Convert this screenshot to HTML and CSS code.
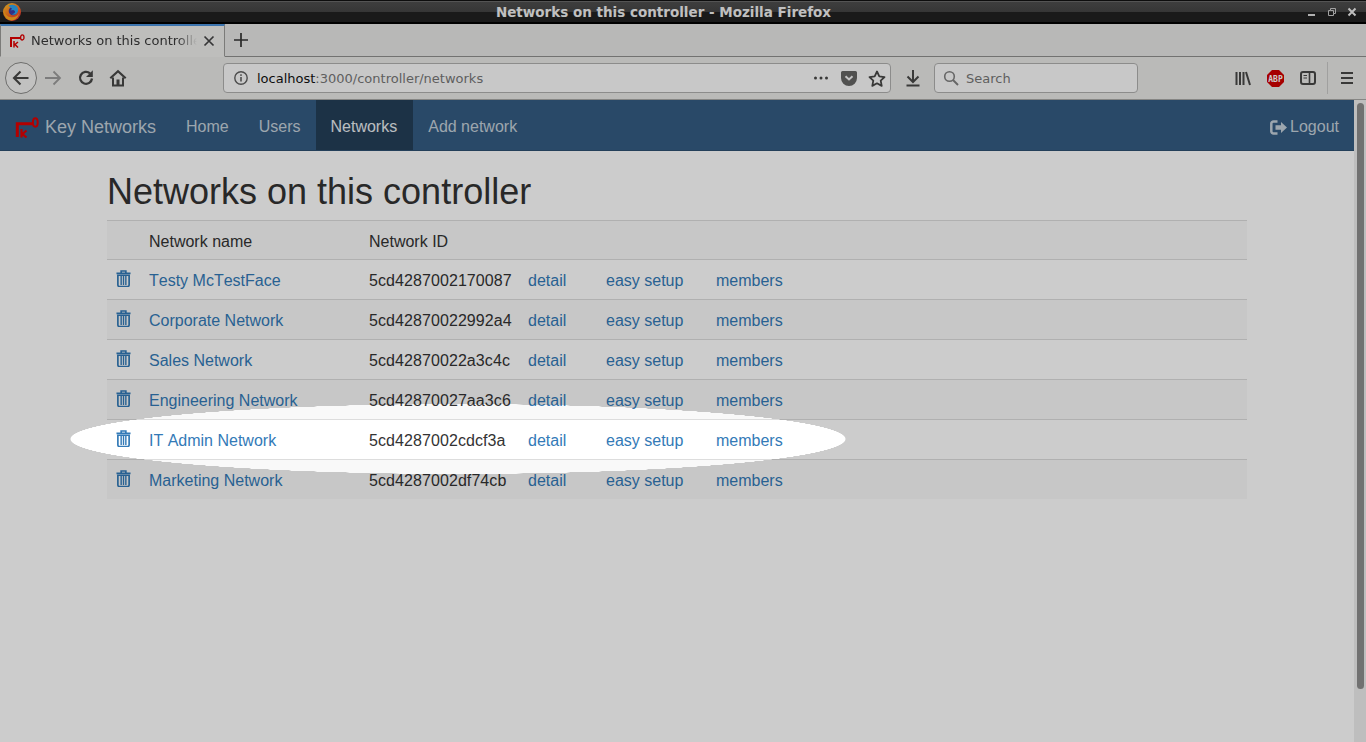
FILE: index.html
```html
<!DOCTYPE html>
<html lang="en">
<head>
<meta charset="utf-8">
<title>Networks on this controller</title>
<link rel="stylesheet" href="styles.css">
</head>
<body>
<div class="window">
  <header class="titlebar">
    <svg class="ff-logo" width="18" height="18" viewBox="0 0 18 18">
      <defs><linearGradient id="ffg" x1="0.1" y1="0" x2="0.8" y2="1"><stop offset="0" stop-color="#ffc62b"/><stop offset=".5" stop-color="#ff7a1f"/><stop offset="1" stop-color="#e0243c"/></linearGradient></defs>
      <circle cx="9" cy="9" r="9" fill="url(#ffg)"/>
      <circle cx="10" cy="8" r="4.300" fill="#3f3aa5"/>
      <path d="M5.500 2.700c3-1.900 7.500-1.200 9 1.800 1.200 2.300.6 5.200-1.400 6.500-1.700 1.100-3.500.8-4.700-.2 1.700.3 3-.3 3.500-1.400.4-1-.2-2-1.600-2.400L7.500 7.600 9 5.700C7.800 4.900 6.700 3.600 5.500 2.700z" fill="#2da6f0"/>
      <path d="M.6 6.500c.9 4.500 3.700 7.600 8.100 7.800 3.200.1 5.900-1.300 7.300-4C15.300 14.800 12 17.500 8.700 17.500 4 17.500.2 13 .6 6.500z" fill="#ffab1f"/>
    </svg>
    <span class="window-title">Networks on this controller - Mozilla Firefox</span>
    <div class="window-buttons">
      <svg width="12" height="12" viewBox="0 0 12 12"><rect x="2" y="8" width="7" height="2" fill="#ddd"/></svg>
      <svg width="12" height="12" viewBox="0 0 12 12"><path d="M4.500 2.500h5v5h-2v2h-5v-5h2zM4.500 4.500h3v3" fill="none" stroke="#ccc"/></svg>
      <svg width="12" height="12" viewBox="0 0 12 12"><path d="M2.500 2.500l7 7M9.500 2.500l-7 7" stroke="#eee" stroke-width="2"/></svg>
    </div>
  </header>

  <div class="tabbar">
    <div class="tab">
      <svg class="key-small" width="15" height="14" viewBox="0 0 15 14"><path d="M1 13V4h9.500" fill="none" stroke="#e00000" stroke-width="2"/><ellipse cx="12.300" cy="3.400" rx="1.700" ry="2.600" fill="none" stroke="#e00000" stroke-width="1.300"/><path d="M4 7v6.500M8 8L5 10.500l3 3" fill="none" stroke="#e00000" stroke-width="1.500"/></svg>
      <span class="tab-label">Networks on this controller</span>
      <svg class="tab-close" width="12" height="12" viewBox="0 0 12 12"><path d="M1.500 1.500l9 9M10.500 1.500l-9 9" stroke="#444" stroke-width="1.700"/></svg>
    </div>
    <svg class="new-tab" width="16" height="16" viewBox="0 0 16 16"><path d="M8 1v14M1 8h14" stroke="#333" stroke-width="1.700"/></svg>
  </div>

  <nav class="toolbar">
    <span class="back-btn">
      <svg width="20" height="20" viewBox="0 0 20 20"><path d="M17.500 10H3.500M9.500 3.500L3 10l6.500 6.500" fill="none" stroke="#484847" stroke-width="2.100"/></svg>
    </span>
    <svg class="tb-icon forward" width="18" height="18" viewBox="0 0 18 18"><path d="M1 9h15M9.500 2.500L16 9l-6.500 6.500" fill="none" stroke="#9c9c9b" stroke-width="1.800"/></svg>
    <svg class="tb-icon reload" width="18" height="18" viewBox="0 0 18 18"><path d="M15 9.500A6 6 0 1 1 13 4.300" fill="none" stroke="#484847" stroke-width="2.300"/><path d="M15.800 1.200v6.800H9z" fill="#484847"/></svg>
    <svg class="tb-icon home" width="18" height="18" viewBox="0 0 18 18"><path d="M1.300 9.300L9 2.200l7.700 7.100" fill="none" stroke="#484847" stroke-width="2.200"/><path d="M4 8.500V16.500h10V8.500" fill="none" stroke="#484847" stroke-width="2"/><rect x="7.500" y="10.500" width="3" height="6" fill="#484847"/></svg>
    <div class="urlbar">
      <svg width="16" height="16" viewBox="0 0 16 16"><circle cx="8" cy="8" r="6.200" fill="none" stroke="#606060" stroke-width="1.400"/><rect x="7.200" y="7" width="1.600" height="4.500" fill="#606060"/><rect x="7.200" y="4.300" width="1.600" height="1.600" fill="#606060"/></svg>
      <span class="url"><span class="host">localhost</span>:3000/controller/networks</span>
      <svg class="dots" width="16" height="4" viewBox="0 0 16 4"><circle cx="2.500" cy="2" r="1.500" fill="#484847"/><circle cx="8" cy="2" r="1.500" fill="#484847"/><circle cx="13.500" cy="2" r="1.500" fill="#484847"/></svg>
      <svg class="pocket" width="16" height="15" viewBox="0 0 16 15"><path d="M1.500 0h13A1.500 1.500 0 0 1 16 1.500V7A8 8 0 0 1 0 7V1.500A1.500 1.500 0 0 1 1.500 0z" fill="#666665"/><path d="M4.500 5.200L8 8.500l3.500-3.300" fill="none" stroke="#f5f5f5" stroke-width="2"/></svg>
      <svg class="star" width="18" height="17" viewBox="0 0 18 17"><path d="M9 1.500l2.300 4.900 5.200.7-3.800 3.600 1 5.200L9 13.300l-4.700 2.600 1-5.200L1.500 7.100l5.200-.7z" fill="none" stroke="#484847" stroke-width="1.800" stroke-linejoin="round"/></svg>
    </div>
    <svg class="download" width="16" height="18" viewBox="0 0 16 18"><path d="M8 1v11M2.500 7.500L8 13l5.500-5.500" fill="none" stroke="#484847" stroke-width="2"/><rect x="1.500" y="15.500" width="13" height="2" fill="#484847"/></svg>
    <div class="searchbar">
      <svg width="16" height="16" viewBox="0 0 16 16"><circle cx="6.500" cy="6.500" r="4.800" fill="none" stroke="#808080" stroke-width="1.600"/><path d="M10 10l5 5" stroke="#808080" stroke-width="1.900"/></svg>
      <span class="search-text">Search</span>
    </div>
    <div class="tb-right">
      <svg width="16" height="15" viewBox="0 0 16 15"><path d="M1.500 1v13M5 1v13M8.500 1v13M11 1l4 13" fill="none" stroke="#484847" stroke-width="2"/></svg>
      <svg class="abp" width="17" height="17" viewBox="0 0 17 17"><path d="M5 0h7l5 5v7l-5 5H5l-5-5V5z" fill="#d00000"/><text x="8.500" y="11.500" class="abp-text" text-anchor="middle">ABP</text></svg>
      <svg width="16" height="14" viewBox="0 0 16 14"><rect x="1" y="1" width="14" height="12" rx="2" fill="none" stroke="#484847" stroke-width="2"/><path d="M9.500 1v12" stroke="#484847" stroke-width="1.600"/><path d="M3.500 4.500h3.500M3.500 7h3.500" stroke="#484847" stroke-width="1"/></svg>
      <span class="tb-sep"></span>
      <svg width="12" height="12" viewBox="0 0 12 12"><path d="M0 1h12M0 6h12M0 11h12" stroke="#484847" stroke-width="2"/></svg>
    </div>
  </nav>

  <div class="viewport">
    <main class="page">
      <div class="navbar">
        <a class="brand">
          <svg width="24" height="21" viewBox="0 0 24 21"><path d="M2.300 20V6.700h15" fill="none" stroke="#e00000" stroke-width="3"/><ellipse cx="20.300" cy="5.500" rx="2.400" ry="4.200" fill="none" stroke="#e00000" stroke-width="2"/><path d="M6.500 12V20.500M11.500 13.500l-4 3.500 4 3.500" fill="none" stroke="#e00000" stroke-width="2.200"/></svg>
          <span>Key Networks</span>
        </a>
        <a class="nav-link">Home</a>
        <a class="nav-link">Users</a>
        <a class="nav-link active">Networks</a>
        <a class="nav-link">Add network</a>
        <a class="nav-link logout">
          <svg width="17" height="15" viewBox="0 0 17 15"><path d="M7.500 1.500H3.500A2.200 2.200 0 0 0 1.300 3.700v7.600a2.200 2.200 0 0 0 2.200 2.200h4" fill="none" stroke="#c4d0da" stroke-width="2.500"/><path d="M5.500 5.300h5.500V2l6 5.500-6 5.500V9.700H5.500z" fill="#c4d0da"/></svg>
          <span>Logout</span>
        </a>
      </div>
      <div class="container">
        <h1>Networks on this controller</h1>
        <table class="networks">
          <colgroup><col class="c-del"><col class="c-name"><col class="c-id"><col class="c-detail"><col class="c-setup"><col></colgroup>
          <tr class="striped head"><td></td><td>Network name</td><td>Network ID</td><td></td><td></td><td></td></tr>
          <tr><td><svg class="trash" viewBox="0 0 16 18"><use href="#trash"/></svg></td><td><a>Testy McTestFace</a></td><td class="net-id">5cd4287002170087</td><td><a>detail</a></td><td><a>easy setup</a></td><td><a>members</a></td></tr>
          <tr class="striped"><td><svg class="trash" viewBox="0 0 16 18"><use href="#trash"/></svg></td><td><a>Corporate Network</a></td><td class="net-id">5cd42870022992a4</td><td><a>detail</a></td><td><a>easy setup</a></td><td><a>members</a></td></tr>
          <tr><td><svg class="trash" viewBox="0 0 16 18"><use href="#trash"/></svg></td><td><a>Sales Network</a></td><td class="net-id">5cd42870022a3c4c</td><td><a>detail</a></td><td><a>easy setup</a></td><td><a>members</a></td></tr>
          <tr class="striped"><td><svg class="trash" viewBox="0 0 16 18"><use href="#trash"/></svg></td><td><a>Engineering Network</a></td><td class="net-id">5cd42870027aa3c6</td><td><a>detail</a></td><td><a>easy setup</a></td><td><a>members</a></td></tr>
          <tr><td><svg class="trash" viewBox="0 0 16 18"><use href="#trash"/></svg></td><td><a>IT Admin Network</a></td><td class="net-id">5cd4287002cdcf3a</td><td><a>detail</a></td><td><a>easy setup</a></td><td><a>members</a></td></tr>
          <tr class="striped"><td><svg class="trash" viewBox="0 0 16 18"><use href="#trash"/></svg></td><td><a>Marketing Network</a></td><td class="net-id">5cd4287002df74cb</td><td><a>detail</a></td><td><a>easy setup</a></td><td><a>members</a></td></tr>
        </table>
      </div>
    </main>
    <div class="scrollbar"><span class="thumb"></span></div>
  </div>
</div>
<div class="spotlight"></div>
<svg class="defs" width="0" height="0"><defs><g id="trash"><path d="M5.500 3V1h5v2M0.500 3.500h15" fill="none" stroke="currentColor" stroke-width="1.800"/><path d="M2 5.500h12V16a1.500 1.500 0 0 1-1.500 1.500h-9A1.500 1.500 0 0 1 2 16z" fill="none" stroke="currentColor" stroke-width="1.800"/><path d="M5.500 6v10M8 6v10M10.500 6v10" stroke="currentColor" stroke-width="1.500"/></g></defs></svg>
</body>
</html>
```
FILE: styles.css
```css
* { box-sizing: border-box; }
html, body { margin: 0; height: 100%; overflow: hidden; }
body { font-family: "Liberation Sans", Arial, sans-serif; font-size: 16px; color: #333; background: #fff; }
.defs { position: absolute; }
.window { display: flex; flex-direction: column; height: 742px; width: 1366px; }

.titlebar { height: 24px; flex: none; display: flex; align-items: center; padding: 0 8px 0 3px;
  background: linear-gradient(#111 0, #111 1px, #6a6a6a 1px, #6a6a6a 2px, #4e4e4e 2px, #444 12px, #212121 12px, #212121 22px, #000 22px); }
.ff-logo { flex: none; }
.window-title { flex: 1; text-align: center; font: bold 13.5px "DejaVu Sans", sans-serif; color: #f0f0f0; margin-top: -1px; }
.window-buttons { display: flex; gap: 8px; margin-top: -1px; }

.tabbar { height: 33px; flex: none; display: flex; align-items: center; background: #e7e7e5; border-bottom: 1px solid #8f8f8e; }
.tab { width: 225px; height: 33px; margin-bottom: -1px; display: flex; align-items: center; padding: 0 9px 0 9px; background: #eeeeec; border-top: 2px solid #4a90d9; border-right: 1px solid #9a9a98; border-left: 1px solid #9a9a98; border-bottom: 1px solid #eeeeec; }
.key-small { flex: none; margin-top: -1px; }
.tab-label { flex: 1; min-width: 0; margin: -2px 0 0 6px; font: 13px "DejaVu Sans", sans-serif; color: #3a3a3a; white-space: nowrap; overflow: hidden; -webkit-mask-image: linear-gradient(to right, #000 88%, transparent 100%); mask-image: linear-gradient(to right, #000 88%, transparent 100%); }
.tab-close { flex: none; margin-left: 6px; }
.new-tab { margin-left: 8px; }

.toolbar { height: 43px; flex: none; display: flex; align-items: center; background: #e9e9e7; border-bottom: 1px solid #a8a8a6; padding-left: 5px; }
.back-btn { width: 32px; height: 32px; border-radius: 50%; border: 1px solid #8a8a88; background: #f2f2f0; display: flex; align-items: center; justify-content: center; flex: none; }
.tb-icon { flex: none; }
.forward { margin-left: 7px; }
.reload { margin-left: 15px; }
.home { margin-left: 14px; }
.urlbar { width: 668px; height: 30px; margin-left: 96px; flex: none; display: flex; align-items: center; background: #fbfbfb; border: 1px solid #b0b0ae; border-radius: 4px; padding: 0 4px 0 9px; }
.url { flex: 1; margin-left: 8px; font: 13px "DejaVu Sans", sans-serif; color: #777; white-space: nowrap; }
.host { color: #111; }
.dots { margin-right: 12px; }
.pocket { margin-right: 11px; }
.star { flex: none; }
.download { margin-left: 14px; flex: none; }
.searchbar { width: 204px; height: 30px; margin-left: 13px; flex: none; display: flex; align-items: center; gap: 7px; padding-left: 8px; background: #fbfbfb; border: 1px solid #b0b0ae; border-radius: 4px; }
.search-text { font: 13px "DejaVu Sans", sans-serif; color: #777; }
.tb-right { margin-left: auto; display: flex; align-items: center; padding-right: 13px; gap: 16px; }
.abp-text { font: bold 8px "DejaVu Sans Mono", monospace; fill: #fff; }
.tb-sep { width: 1px; height: 32px; background: #c9c9c7; margin: 0 -3px 0 -5px; }

.viewport { flex: 1; display: flex; min-height: 0; }
.page { flex: 1; min-width: 0; background: #fff; }
.scrollbar { width: 12px; flex: none; background: #eeeeee; display: flex; justify-content: center; padding: 3px 0; }
.thumb { width: 7px; height: 586px; background: #8e8e8e; border-radius: 4px; }

.navbar { height: 51px; display: flex; align-items: stretch; background: #345c82; border-bottom: 1px solid #2c4f70; padding: 0 0 0 15px; }
.brand { display: flex; align-items: center; gap: 6px; padding-top: 4px; font-size: 18px; color: #c4d0da; margin-right: 15px; }
.brand svg { flex: none; }
.nav-link { display: flex; align-items: center; padding: 4px 15px 0; color: #c4d0da; }
.nav-link.active { background: #243f58; color: #e8edf1; padding-right: 16px; }
.logout { margin-left: auto; gap: 3px; }

.container { width: 1170px; margin: 0 auto; padding: 21px 15px 0; }
h1 { font-size: 36px; font-weight: 500; line-height: 1.1; margin: 0 0 8px; color: #333; }
.networks { width: 1140px; table-layout: fixed; border-collapse: collapse; font-kerning: none; }
.c-del { width: 34px; }
.c-name { width: 220px; }
.c-id { width: 159px; }
.c-detail { width: 78px; }
.c-setup { width: 110px; }
.networks td { padding: 9px 8px 7px; line-height: 23px; height: 40px; border-top: 1px solid #ddd; vertical-align: top; white-space: nowrap; }
.networks .head td { height: 39px; padding-bottom: 6px; }
.net-id { letter-spacing: .08px; }
.striped { background: #f9f9f9; }
.networks a { color: #337ab7; }
.trash { display: block; width: 15px; height: 17px; color: #337ab7; margin: 1px 0 0 1px; }

.spotlight { position: fixed; inset: 0; pointer-events: none;
  background: radial-gradient(ellipse 388px 35px at 458px 439px, transparent 99.7%, rgba(0,0,0,.2) 100%); }
```
